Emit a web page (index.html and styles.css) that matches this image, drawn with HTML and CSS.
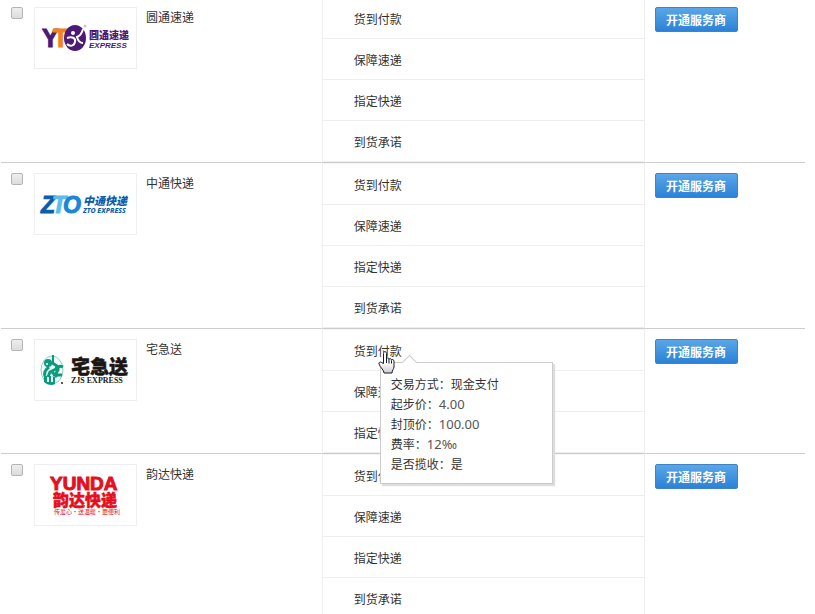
FILE: index.html
```
<!DOCTYPE html>
<html lang="zh-CN">
<head>
  <meta charset="UTF-8">
  <meta name="viewport" content="width=device-width, initial-scale=1.0">
  <title>物流服务商</title>
  <link rel="stylesheet" href="styles.css">
</head>
<body>
  <table class="providers">
    <!-- 圆通 -->
    <tr>
      <td>
        <div class="company">
          <input type="checkbox" id="yto">
          <svg class="logo" viewBox="0 0 101 60" aria-hidden="true">
            <g class="latin narrow" font-size="25">
              <text x="7" y="39" fill="#4b1a74" stroke="#4b1a74">Y</text>
              <text x="18" y="39" fill="#f58220" stroke="#f58220">T</text>
            </g>
            <ellipse cx="40" cy="30" rx="11" ry="13" fill="#4b1a74"/>
            <circle cx="38" cy="25" r="2" fill="#fff"/>
            <path d="M32 30c5-2 9 0 8 4s-5 5-8 2M48 21c-1 4-3 7-6 8 1 4 3 6 6 6" fill="none" stroke="#fff" stroke-width="2"/>
            <circle cx="50" cy="18" r="1" fill="none" stroke="#8a6aa5" stroke-width=".5"/>
            <text class="cn heavy" x="54" y="31" font-size="10" fill="#4b1a74">圆通速递</text>
            <text class="latin" x="54" y="40" font-size="8" font-style="italic" fill="#4b1a74">EXPRESS</text>
          </svg>
          <label for="yto">圆通速递</label>
        </div>
      </td>
      <td>
        <ul class="services">
          <li>货到付款</li>
          <li>保障速递</li>
          <li>指定快递</li>
          <li>到货承诺</li>
        </ul>
      </td>
      <td class="action"><button type="button">开通服务商</button></td>
    </tr>
    <!-- 中通 -->
    <tr>
      <td>
        <div class="company">
          <input type="checkbox" id="zto">
          <svg class="logo" viewBox="0 0 101 60" aria-hidden="true">
            <g class="latin" font-size="23" font-style="italic">
              <text x="6" y="39" fill="#0b5cab" stroke="#0b5cab">Z</text>
              <text x="17" y="39" fill="#5cbcee" stroke="#5cbcee">T</text>
              <text x="28" y="39" fill="#1c86d2" stroke="#1c86d2">O</text>
            </g>
            <text class="cn heavy slant" x="48" y="31" font-size="11" fill="#0b5cab">中通快递</text>
            <text class="sans" x="48" y="39" font-size="7" fill="#0b5cab">ZTO EXPRESS</text>
          </svg>
          <label for="zto">中通快递</label>
        </div>
      </td>
      <td>
        <ul class="services">
          <li>货到付款</li>
          <li>保障速递</li>
          <li>指定快递</li>
          <li>到货承诺</li>
        </ul>
      </td>
      <td class="action"><button type="button">开通服务商</button></td>
    </tr>
    <!-- 宅急送 -->
    <tr>
      <td>
        <div class="company">
          <input type="checkbox" id="zjs">
          <svg class="logo" viewBox="0 0 101 60" aria-hidden="true">
            <ellipse cx="17" cy="30" rx="11" ry="14" fill="#f1faf7" stroke="#8fd0c0"/>
            <path d="M18 15v9" fill="none" stroke="#0b9a7c" stroke-width="2"/>
            <circle cx="13" cy="23" r="4" fill="#0b9a7c"/>
            <circle cx="12" cy="24" r="1" fill="#fff"/>
            <path d="M16 22l6 4-1 3-6 3-2 5M14 27c-4 3-5 6-4 9" fill="none" stroke="#0b9a7c" stroke-width="3"/>
            <path d="M28 27c-4-2-6 1-5 3l-3 5h7M17 32l5 5" fill="none" stroke="#0b9a7c" stroke-width="3"/>
            <path d="M9 36h3v6h2v-6h2v6h2v-5h2v7c-3 2-8 1-11-2z" fill="#0b9a7c"/>
            <circle cx="27" cy="43" r="1" fill="#222"/>
            <text class="cn heavy" x="36" y="34" font-size="19" fill="#1c1715" stroke="#1c1715" stroke-width=".5">宅急送</text>
            <text class="serif" x="36" y="43" font-size="8" fill="#1c1715">ZJS EXPRESS</text>
          </svg>
          <label for="zjs">宅急送</label>
        </div>
      </td>
      <td>
        <ul class="services">
          <li>
            货到付款
            <div class="tip" role="tooltip">
              <p>交易方式：现金支付</p>
              <p>起步价：<span>4.00</span></p>
              <p>封顶价：<span>100.00</span></p>
              <p>费率：<span>12‰</span></p>
              <p>是否揽收：是</p>
            </div>
            <svg class="pointer" viewBox="0 0 17 23" aria-hidden="true">
              <defs>
                <linearGradient id="hand" x1="0" y1="0" x2="0" y2="1">
                  <stop offset=".5" stop-color="#fff"/>
                  <stop offset="1" stop-color="#ccc"/>
                </linearGradient>
              </defs>
              <path d="M5.500 12.500V2.500c0-2.500 3-2.500 3 0v5.500c0-1.500 2.500-1.500 2.500.5 0-1.500 2.500-1 2.500.7 0-1.200 2.500-1 2.500 1V16c0 2-2 3-2 6H6c0-3-3.500-5-5-9-.5-2 1.500-2.500 2.500-1.500z" fill="url(#hand)" stroke="#1a1a2a"/>
              <path d="M8.500 8v4M11 8.500v4M13.500 9.500v3" fill="none" stroke="#1a1a2a"/>
            </svg>
          </li>
          <li>保障速递</li>
          <li>指定快递</li>
        </ul>
      </td>
      <td class="action"><button type="button">开通服务商</button></td>
    </tr>
    <!-- 韵达 -->
    <tr>
      <td>
        <div class="company">
          <input type="checkbox" id="yunda">
          <svg class="logo" viewBox="0 0 101 60" aria-hidden="true">
            <text class="latin" x="15" y="25" font-size="19" fill="#e60f1e" stroke="#e60f1e">YUNDA</text>
            <text class="cn heavy" x="18" y="41" font-size="16" fill="#e60f1e" stroke="#e60f1e" stroke-width=".5">韵达快递</text>
            <text class="cn thin" x="19" y="49" font-size="6" fill="#e60f1e">传爱心·送温暖·更便利</text>
          </svg>
          <label for="yunda">韵达快递</label>
        </div>
      </td>
      <td>
        <ul class="services">
          <li>货到付款</li>
          <li>保障速递</li>
          <li>指定快递</li>
          <li>到货承诺</li>
        </ul>
      </td>
      <td class="action"><button type="button">开通服务商</button></td>
    </tr>
  </table>
</body>
</html>
```

FILE: styles.css
```
body {
  margin: 0;
  padding: 0 10px 0 1px;
  overflow: hidden;
  font-family: "Noto Sans CJK SC", sans-serif;
  font-size: 12px;
  line-height: 20px;
  color: #333;
  background-color: #fff;
}
.providers {
  width: 100%;
  margin-top: -3px;
  table-layout: fixed;
  border-spacing: 0;
}
td {
  width: 40%;
  padding: 0;
  vertical-align: top;
  border-bottom: 1px solid #ccc;
}
td:nth-child(2) {
  border-left: 1px solid #eee;
  border-right: 1px solid #eee;
}
td:last-child {
  width: 20%;
}
/* Company */
.company {
  display: flex;
  align-items: flex-start;
  padding: 10px;
}
.company input {
  appearance: none;
  box-sizing: border-box;
  width: 12px;
  height: 12px;
  margin: 0 11px 0 0;
  border: 1px solid #b4b4b4;
  border-radius: 2px;
  background: linear-gradient(#eee, #dcdcdc);
}
.company input:checked {
  background: #3a8ddb;
}
.company label {
  margin-left: 9px;
}
.logo {
  width: 101px;
  height: 60px;
  border: 1px solid #eee;
}
.latin {
  font-family: "Liberation Sans", Arial, sans-serif;
  font-weight: bold;
}
.narrow {
  font-family: "Liberation Sans Narrow", "Liberation Sans", sans-serif;
}
.sans {
  font-family: "Noto Sans", sans-serif;
  font-weight: 800;
  font-style: italic;
}
.serif {
  font-family: "Liberation Serif", serif;
  font-weight: bold;
}
.cn {
  font-weight: bold;
}
.slant {
  font-style: italic;
}
.heavy {
  font-weight: 900;
}
.thin {
  font-weight: normal;
}
/* Services */
.services {
  margin: 0;
  padding: 0;
  list-style: none;
  border-top: 1px solid #f4f4f4;
}
.services li {
  position: relative;
  padding: 11px 0 9px 31px;
  border-bottom: 1px solid #eee;
}
/* Tooltip */
.tip {
  position: absolute;
  top: 32px;
  left: 57px;
  z-index: 1;
  box-sizing: border-box;
  width: 173px;
  padding: 11px 10px 9px;
  border: 1px solid #ccc;
  background-color: #fff;
  box-shadow: 2px 2px 1px #ddd;
}
.tip::before {
  content: "";
  position: absolute;
  top: -6px;
  left: 23px;
  width: 10px;
  height: 10px;
  border-top: 1px solid #ccc;
  border-left: 1px solid #ccc;
  background-color: #fff;
  transform: rotate(45deg);
}
.tip p {
  margin: 0;
}
.tip span {
  font-family: "Noto Sans", sans-serif;
  font-size: 13px;
  color: #555;
}
.pointer {
  position: absolute;
  top: 21px;
  left: 55px;
  z-index: 2;
  width: 17px;
  height: 23px;
}
/* Button */
.action button {
  display: block;
  height: 25px;
  min-width: 83px;
  margin: 10px;
  padding: 0 10px;
  border: 1px solid #3f83c4;
  border-radius: 2px;
  background: linear-gradient(#5aa6e8, #2b82d6);
  font-family: inherit;
  font-size: 12px;
  font-weight: bold;
  line-height: 20px;
  color: #fff;
}
.action button:hover {
  background: #2b82d6;
}
```
